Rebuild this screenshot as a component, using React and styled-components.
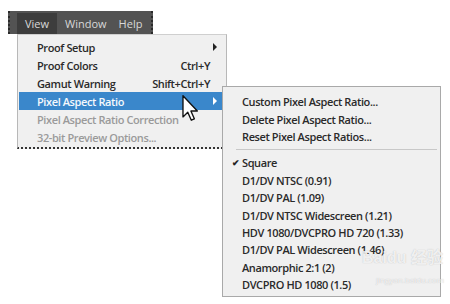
import React from 'react';
import styled, { createGlobalStyle } from 'styled-components';

const mainItems = [
  { label: 'Proof Setup', arrow: true },
  { label: 'Proof Colors', shortcut: 'Ctrl+Y' },
  { label: 'Gamut Warning', shortcut: 'Shift+Ctrl+Y' },
  { label: 'Pixel Aspect Ratio', arrow: true, active: true },
  { label: 'Pixel Aspect Ratio Correction', disabled: true },
  { label: '32-bit Preview Options...', disabled: true },
];

const topItems = ['Custom Pixel Aspect Ratio...', 'Delete Pixel Aspect Ratio...', 'Reset Pixel Aspect Ratios...'];

const ratios = [
  { label: 'Square', checked: true },
  { label: 'D1/DV NTSC (0.91)' },
  { label: 'D1/DV PAL (1.09)' },
  { label: 'D1/DV NTSC Widescreen (1.21)' },
  { label: 'HDV 1080/DVCPRO HD 720 (1.33)' },
  { label: 'D1/DV PAL Widescreen (1.46)' },
  { label: 'Anamorphic 2:1 (2)' },
  { label: 'DVCPRO HD 1080 (1.5)' },
];

const App = () => {
  return (
    <Page>
      <GlobalStyle />
      <MenuBar>
        <MenuTitle $open>View</MenuTitle>
        <MenuTitle>Window</MenuTitle>
        <MenuTitle>Help</MenuTitle>
      </MenuBar>

      <Dropdown>
        {mainItems.map(({ label, shortcut, arrow, active, disabled }) => (
          <Row key={label} $active={active} $disabled={disabled}>
            <span>{label}</span>
            {shortcut && <span>{shortcut}</span>}
            {arrow && <Arrow $active={active} />}
          </Row>
        ))}
      </Dropdown>

      <Submenu>
        {topItems.map((label) => (
          <SubRow key={label}>{label}</SubRow>
        ))}
        <Separator />
        {ratios.map(({ label, checked }) => (
          <SubRow key={label}>
            {checked && <Check>✔</Check>}
            {label}
          </SubRow>
        ))}
      </Submenu>

      <Cursor width="17" height="26" viewBox="0 0 12 19">
        <path d="M0.5 0.5 L0.5 16 L4 12.6 L6.6 18.4 L8.8 17.4 L6.3 11.7 L11 11.7 Z" fill="#fff" stroke="#111" strokeWidth="1" strokeLinejoin="round" />
      </Cursor>

      <Watermark>
        <span>Bai<b>du</b> 经验</span>
        <small>jingyan.baidu.com</small>
      </Watermark>
    </Page>
  );
};

export default App;

const GlobalStyle = createGlobalStyle`
  html, body {
    margin: 0;
    padding: 0;
    background: #ffffff;
  }
  body {
    font-family: "Open Sans", "Noto Sans", sans-serif;
  }
`;

const Page = styled.div`
  position: relative;
  width: 450px;
  height: 304px;
  overflow: hidden;
  padding: 11px 0 0 8px;
  box-sizing: border-box;
`;

const MenuBar = styled.div`
  display: flex;
  align-items: stretch;
  gap: 8px;
  width: 145px;
  height: 23px;
  padding: 2px 0 0 7px;
  box-sizing: border-box;
  background: #535353;
  border-left: 2px dotted #2a2a2a;
  border-right: 2px dotted #2a2a2a;
`;

const MenuTitle = styled.div`
  display: flex;
  align-items: center;
  padding: ${({ $open }) => ($open ? '0 8px' : '0 4px 0 0')};
  font-size: 11px;
  white-space: nowrap;
  color: #d8d8d8;
  background: ${({ $open }) => ($open ? '#3d3d3d' : 'transparent')};
`;

const Dropdown = styled.div`
  position: absolute;
  left: 17px;
  top: 34px;
  width: 210px;
  padding: 3px 0 1px;
  box-sizing: border-box;
  background: #f0f0f0;
  border: 1px solid #b8b8b8;
  border-top-color: #cfcfcf;
  border-bottom: 2px dotted #333;
`;

const Row = styled.div`
  position: relative;
  display: flex;
  align-items: center;
  justify-content: space-between;
  height: 18px;
  margin: 0 3px 0 1px;
  padding: 0 13px 0 18px;
  font-size: 11px;
  font-weight: 600;
  letter-spacing: -0.4px;
  white-space: nowrap;
  color: ${({ $active, $disabled }) => ($active ? '#f4f8fc' : $disabled ? '#9a9a9a' : '#2a2a2a')};
  background: ${({ $active }) => ($active ? '#3a87cb' : 'transparent')};
`;

const Arrow = styled.i`
  position: absolute;
  right: 6px;
  top: 5px;
  width: 0;
  height: 0;
  border-top: 4px solid transparent;
  border-bottom: 4px solid transparent;
  border-left: 4px solid ${({ $active }) => ($active ? '#ffffff' : '#222')};
`;

const Submenu = styled.div`
  position: absolute;
  left: 222px;
  top: 86px;
  width: 219px;
  padding: 6px 0 3px;
  box-sizing: border-box;
  background: #f0f0f0;
  border: 1px solid #a9a9a9;
`;

const SubRow = styled.div`
  position: relative;
  display: flex;
  align-items: center;
  height: 17.4px;
  padding-left: 19px;
  font-size: 11px;
  font-weight: 600;
  letter-spacing: -0.4px;
  white-space: nowrap;
  color: #2a2a2a;
`;

const Check = styled.span`
  position: absolute;
  left: 9px;
  font-size: 9px;
  color: #222;
`;

const Separator = styled.div`
  height: 1px;
  margin: 4px 3px 4px 13px;
  background: #c8c8c8;
`;

const Cursor = styled.svg`
  position: absolute;
  left: 182px;
  top: 95px;
`;

const Watermark = styled.div`
  position: absolute;
  left: 362px;
  top: 248px;
  display: flex;
  flex-direction: column;
  align-items: flex-start;
  white-space: nowrap;
  color: rgba(255, 255, 255, 0.8);
  text-shadow: 0 0 1px rgba(110, 110, 110, 0.45);
  pointer-events: none;

  span {
    font-family: "Liberation Sans", "Noto Sans CJK SC", sans-serif;
    font-size: 16px;
    font-weight: 700;
    line-height: 20px;
  }

  small {
    font-size: 8px;
    line-height: 11px;
    margin: 6px 0 0 14px;
  }
`;
